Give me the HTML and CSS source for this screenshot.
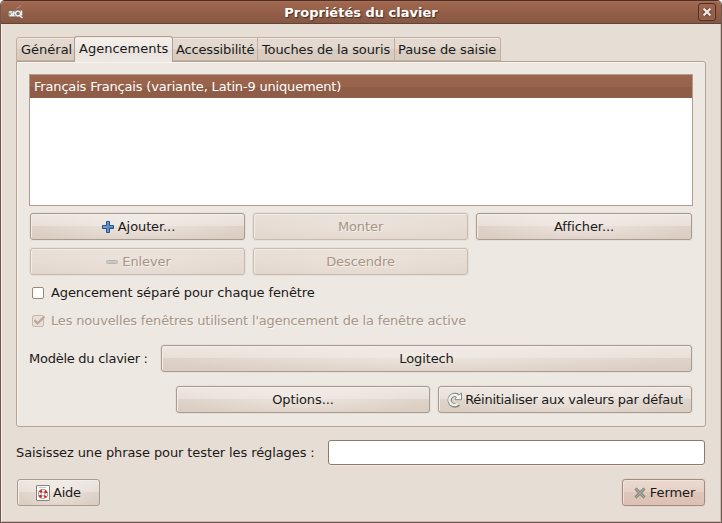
FILE: index.html
```
<!DOCTYPE html>
<html lang="fr">
<head>
<meta charset="utf-8">
<title>Propriétés du clavier</title>
<link rel="stylesheet" href="styles.css">
</head>
<body>
<div class="window">
  <header class="titlebar">
    <svg class="app-icon" width="18" height="18" viewBox="0 0 18 18">
      <path d="M9 6c1-3 5 0 4-4" fill="none" stroke="#b78b78" stroke-width="1"/>
      <path d="M1.5 8l9-1 5 3-1 4H2L.8 12z" fill="#9a9690" stroke="#77645b" stroke-width=".6"/>
      <path d="M2 9h3M2.5 12.5h5M6 9l2 1M4 11h3" stroke="#eeeeea" stroke-width="1.5"/>
      <circle cx="11" cy="10.5" r="2.4" fill="#77736e" stroke="#efefeb" stroke-width="1.3"/>
      <path d="M14.5 7.5v5M12.5 12.5l3 2.5" stroke="#efefeb" stroke-width="1.5"/>
    </svg>
    <h1 class="title">Propriétés du clavier</h1>
    <button class="close" aria-label="Fermer la fenêtre">
      <svg width="10" height="10" viewBox="0 0 10 10"><path d="M1.8 1.8l6.4 6.4M8.2 1.8L1.8 8.2" stroke="#583529" stroke-width="4"/><path d="M1.6 1.6l6.8 6.8M8.4 1.6L1.6 8.4" stroke="#eee4e0" stroke-width="2.3"/></svg>
    </button>
  </header>
  <main class="content">
    <nav class="tabs">
      <div class="tab tab-general">Général</div>
      <div class="tab tab-layouts active">Agencements</div>
      <div class="tab tab-access">Accessibilité</div>
      <div class="tab tab-mouse">Touches de la souris</div>
      <div class="tab tab-break">Pause de saisie</div>
    </nav>
    <section class="panel">
      <div class="list"><div class="row">Français Français (variante, Latin-9 uniquement)</div></div>
      <div class="actions">
        <button class="btn with-icon"><svg width="12" height="12" viewBox="0 0 12 12"><path d="M4.5.5h3v4h4v3h-4v4h-3v-4h-4v-3h4z" fill="#729fcf" stroke="#24508c" stroke-linejoin="round"/><path d="M6 2v8M6 6.5h5" stroke="#4f80ba" stroke-width="1"/></svg>Ajouter...</button>
        <button class="btn disabled" disabled>Monter</button>
        <button class="btn">Afficher...</button>
        <button class="btn disabled with-icon" disabled><svg width="12" height="12" viewBox="0 0 12 12"><rect x=".5" y="4.5" width="11" height="3" rx="1" fill="#c9c6c3" stroke="#b8b4b0"/></svg>Enlever</button>
        <button class="btn disabled" disabled>Descendre</button>
      </div>
      <label class="check"><span class="box"></span>Agencement séparé pour chaque fenêtre</label>
      <label class="check off"><span class="box"><svg width="14" height="12" viewBox="0 0 14 12"><path d="M2.5 5l3 3.5L12.5 1.5" fill="none" stroke="#bda79b" stroke-width="2.2"/></svg></span>Les nouvelles fenêtres utilisent l'agencement de la fenêtre active</label>
      <div class="model"><span class="model-label">Modèle du clavier :</span><button class="btn">Logitech</button></div>
      <div class="options">
        <button class="btn">Options...</button>
        <button class="btn reset"><svg width="16" height="16" viewBox="0 0 16 16"><path d="M11.6 12.1A5.3 5.3 0 1 1 11 3.8" fill="none" stroke="#858b80" stroke-width="4.4"/><path d="M14.5 1v6.7H8.3V6l1.6-1L12 3z" fill="#f4f4f1" stroke="#858b80"/><path d="M11 11.6A5 5 0 1 1 11 4.5l1.8 1.2" fill="none" stroke="#f4f4f1" stroke-width="2.5"/></svg>Réinitialiser aux valeurs par défaut</button>
      </div>
    </section>
    <div class="test"><label for="test">Saisissez une phrase pour tester les réglages :</label><input id="test" type="text"></div>
    <footer class="footer">
      <button class="btn help-btn"><svg width="14" height="16" viewBox="0 0 14 16"><rect x=".5" y=".5" width="13" height="15" rx=".5" fill="#fbfbfa" stroke="#82827e"/><circle cx="7" cy="9" r="3.4" fill="none" stroke="#687b79" stroke-width="3.4"/><circle cx="7" cy="9" r="3.4" fill="none" stroke="#f4eeee" stroke-width="2.2"/><circle cx="7" cy="9" r="3.4" fill="none" stroke="#d32222" stroke-width="2.5" stroke-dasharray="2.67" stroke-dashoffset="1.33" transform="rotate(45 7 9)"/><path d="M3 2.5h7" stroke="#c7c9c5"/></svg>Aide</button>
      <button class="btn close-btn with-icon"><svg width="12" height="12" viewBox="0 0 12 12"><path d="M1.5 1.5l9 9M10.5 1.5l-9 9" stroke="#747a70" stroke-width="3"/><path d="M1.8 1.8l8.4 8.4M10.2 1.8l-8.4 8.4" stroke="#a5aaa1" stroke-width="1.4"/></svg>Fermer</button>
    </footer>
  </main>
</div>
</body>
</html>
```

FILE: styles.css
```
* { box-sizing: border-box; }
body { margin: 0; background: #fff; color: #1a1a1a; font: 13px/16px "DejaVu Sans", sans-serif; }
button, input { margin: 0; color: inherit; font: inherit; }
svg { flex: none; }
.window { width: 722px; height: 523px; overflow: hidden; border: 1px solid #6d5750; border-top-color: #47302a; border-radius: 5px 5px 0 0; background: #e6ddd4; box-shadow: inset 1px 0 #f6efe9, inset -1px -1px #c9bbb0; }
.titlebar { display: flex; align-items: center; height: 23px; padding: 0 5px 0 6px; border-bottom: 1px solid #634238; background: linear-gradient(#b16e54 0, #9e664e 2px, #976049 10px, #855844 100%); }
.app-icon { margin-top: -1px; }
.title { flex: 1; margin: 0; padding-right: 1px; color: #fff; font-size: 13px; line-height: 16px; text-align: center; text-shadow: 1px 1px 1px #482c22; padding-top: 1px; }
.close { display: flex; align-items: center; justify-content: center; width: 18px; height: 18px; padding: 0; border: 1px solid #492e25; border-radius: 3px; background: linear-gradient(#a0654d, #8e5b46); box-shadow: inset 0 0 0 1px #a0664f; }
.content { padding: 12px 15px 0; }
.tabs { display: flex; align-items: flex-end; height: 25px; }
.tab { height: 24px; padding: 4px 0 0 4px; border: 1px solid #c4aea0; border-left-width: 0; background: linear-gradient(#e4dad1 0, #e2d8ce 50%, #d9cec3 51%, #d8cbc0 100%); box-shadow: inset 0 1px #efe8e2; white-space: nowrap; }
.tab-general { width: 59px; border-left-width: 1px; border-top-left-radius: 3px; }
.tab-layouts { width: 99px; }
.tab-access { width: 85px; padding-left: 3px; letter-spacing: -.15px; }
.tab-mouse { width: 137px; padding-left: 4px; letter-spacing: -.15px; }
.tab-break { width: 106px; padding-left: 3px; border-top-right-radius: 3px; letter-spacing: -.08px; }
.tab.active { z-index: 1; height: 26px; margin: 0 0 -1px -1px; padding-top: 4px; border: 1px solid #b59e8f; border-bottom: 0; border-radius: 3px 3px 0 0; background: linear-gradient(#f4f0ec 0, #eee9e4 50%, #eae2dd 55%, #ede8e2 100%); }
.panel { width: 690px; height: 366px; padding: 12px; border: 1px solid #b5a293; border-radius: 0 3px 3px 3px; background: #ede8e2; box-shadow: inset 1px 1px #f8f5f1; }
.list { width: 664px; height: 132px; border: 1px solid #b09d8d; background: #fff; }
.row { height: 23px; padding: 4px 4px 3px; background: linear-gradient(#9c654d 0, #98624b 50%, #8e5d47 51%, #8f5d47 100%); color: #fff; letter-spacing: -.175px; }
.actions { display: grid; grid-template-columns: 215px 215px 216px; grid-auto-rows: 27px; gap: 8px; padding: 7px 0 0 1px; }
.btn { display: flex; align-items: center; justify-content: center; gap: 4px; height: 27px; padding: 1px 0 0; border: 1px solid #a99b8f; border-radius: 3px; background: radial-gradient(ellipse 48% 90% at 50% 45%, #f8f4f080 0, #f8f4f000 100%), linear-gradient(#eee7e1 0, #e8dfd8 47%, #dfd4ca 49%, #dacdc2 100%); box-shadow: inset 1px 1px #f4eee9, 0 0 0 1px #e5dfd8; letter-spacing: -.1px; white-space: nowrap; }
.btn svg { margin-top: -1px; }
.with-icon { padding-left: 2px; }
.btn.disabled { border-color: #cabaae; background: radial-gradient(ellipse 48% 90% at 50% 40%, #eee5df99, transparent), linear-gradient(#e8dfd6, #e6dcd4 50%, #e2d7cd); color: #a79586; text-shadow: 1px 1px #f5efe9; }
.check { display: flex; align-items: center; gap: 7px; height: 16px; margin: 10px 0 0 3px; letter-spacing: -.11px; }
.box { flex: none; width: 12px; height: 12px; border: 1px solid #a08774; border-radius: 2px; background: #fff; }
.off { margin-top: 12px; color: #a79586; letter-spacing: -.167px; text-shadow: 1px 1px #f8f4f0; }
.off .box { border-color: #c8b7aa; background: #e8dfd7; }
.off svg { display: block; margin: -1px; overflow: visible; }
.model { display: flex; align-items: center; height: 27px; margin-top: 16px; }
.model-label { width: 132px; letter-spacing: -.26px; }
.model .btn { width: 531px; }
.options { display: grid; grid-template-columns: 254px 254px; gap: 8px; margin: 14px 0 0 147px; }
.options .reset { gap: 2px; letter-spacing: -.28px; }
.test { display: flex; align-items: center; justify-content: space-between; height: 25px; margin: 13px 1px 0 0; letter-spacing: -.1px; }
.test input { width: 377px; height: 25px; padding: 2px 5px; border: 1px solid #8d7869; border-radius: 3px; background: #fff; box-shadow: 0 1px #f1eae4; }
.footer { display: flex; justify-content: space-between; margin: 14px 1px 0; }
.footer .btn { width: 83px; }
.footer .help-btn { gap: 3px; letter-spacing: -.25px; }
.footer .close-btn { border-color: #a68c80; background: linear-gradient(#ead9cf 0, #e6d1c6 47%, #dfc6ba 49%, #dcc0b3 100%); box-shadow: inset 1px 1px #f0e2da, 0 0 0 1px #e2d6cc; }
```
